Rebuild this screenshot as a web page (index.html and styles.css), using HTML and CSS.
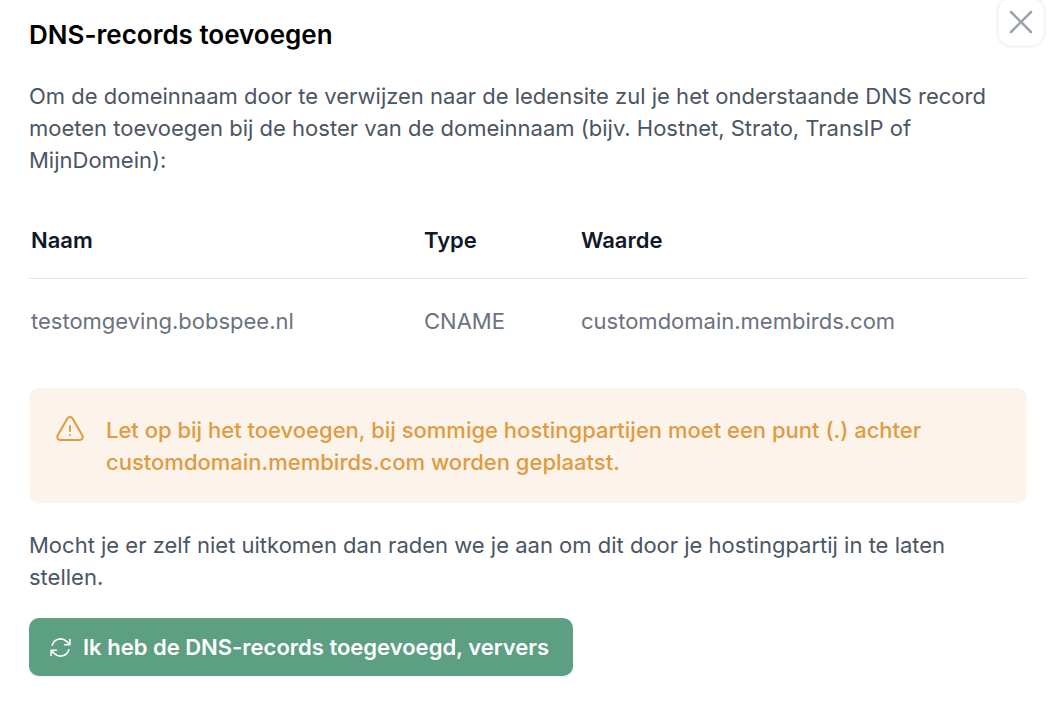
FILE: index.html
```html
<!DOCTYPE html>
<html lang="nl">
<head>
  <meta charset="UTF-8">
  <meta name="viewport" content="width=device-width, initial-scale=1.0">
  <title>DNS-records toevoegen</title>
  <link rel="stylesheet" href="styles.css">
</head>
<body>
  <main class="modal">
    <button type="button" class="close" aria-label="Sluiten">
      <svg viewBox="0 0 24 24" fill="none" stroke="currentColor" stroke-width="1.5" stroke-linecap="round" stroke-linejoin="round">
        <path d="M6 18 18 6M6 6l12 12"/>
      </svg>
    </button>

    <h1>DNS-records toevoegen</h1>
    <p class="intro">Om de domeinnaam door te verwijzen naar de ledensite zul je het onderstaande DNS record moeten toevoegen bij de hoster van de domeinnaam (bijv. Hostnet, Strato, TransIP of MijnDomein):</p>

    <table class="records">
      <thead>
        <tr>
          <th class="col-name">Naam</th>
          <th class="col-type">Type</th>
          <th>Waarde</th>
        </tr>
      </thead>
      <tbody>
        <tr>
          <td>testomgeving.bobspee.nl</td>
          <td>CNAME</td>
          <td>customdomain.membirds.com</td>
        </tr>
      </tbody>
    </table>

    <div class="warning">
      <svg viewBox="0 0 24 24" fill="none" stroke="currentColor" stroke-width="1.5" stroke-linecap="round" stroke-linejoin="round" aria-hidden="true">
        <path d="M12 9v3.75m-9.303 3.376c-.866 1.5.217 3.374 1.948 3.374h14.71c1.73 0 2.813-1.874 1.948-3.374L13.949 3.378c-.866-1.5-3.032-1.5-3.898 0L2.697 16.126ZM12 15.75h.007v.008H12v-.008Z"/>
      </svg>
      <p>Let op bij het toevoegen, bij sommige hostingpartijen moet een punt (.) achter customdomain.membirds.com worden geplaatst.</p>
    </div>

    <p class="help">Mocht je er zelf niet uitkomen dan raden we je aan om dit door je hostingpartij in te laten stellen.</p>

    <button type="button" class="refresh">
      <svg viewBox="0 0 24 24" fill="none" stroke="currentColor" stroke-width="1.5" stroke-linecap="round" stroke-linejoin="round" aria-hidden="true">
        <path d="M16.023 9.348h4.992v-.001M2.985 19.644v-4.992m0 0h4.992m-4.993 0 3.181 3.183a8.25 8.25 0 0 0 13.803-3.7M4.031 9.865a8.25 8.25 0 0 1 13.803-3.7l3.181 3.182m0-4.991v4.99"/>
      </svg>
      Ik heb de DNS-records toegevoegd, ververs
    </button>
  </main>
</body>
</html>
```
FILE: styles.css
```css
body {
  margin: 0;
  background: #fff;
  color: #4b5563;
  font-family: Inter, sans-serif;
  font-size: 22px;
  line-height: 32px;
}
h1, p {
  margin: 0;
}
.modal {
  position: relative;
  padding: 19px 27px 30px 29px;
}
h1 {
  color: #000;
  font-size: 26px;
  font-weight: 600;
}
.close {
  position: absolute;
  top: -4px;
  right: 8px;
  width: 50px;
  height: 52px;
  padding: 0;
  display: flex;
  align-items: center;
  justify-content: center;
  background: #fff;
  border: 3px solid #f4f6f7;
  border-radius: 15px;
  color: #9ca3af;
  cursor: pointer;
}
.close svg {
  width: 40px;
  height: 40px;
}
.intro {
  margin-top: 29px;
}
.records {
  width: 100%;
  margin-top: 24px;
  border-collapse: collapse;
  text-align: left;
}
.records th {
  padding: 24px 2px 22px;
  border-bottom: 1px solid #e5e7eb;
  color: #111827;
  font-weight: 600;
}
.records td {
  padding: 26px 2px 24px;
  color: #6b7280;
}
.col-name {
  width: 389px;
}
.col-type {
  width: 153px;
}
.warning {
  display: flex;
  gap: 20px;
  margin-top: 27px;
  padding: 26px 27px 25px 25px;
  background: #fcf4eb;
  border-radius: 10px;
  color: #e29a3f;
  font-weight: 500;
}
.warning svg {
  flex: none;
  width: 32px;
  height: 32px;
}
.help {
  margin-top: 26px;
  padding-right: 32px;
}
.refresh {
  display: flex;
  align-items: center;
  gap: 10px;
  margin-top: 25px;
  padding: 13px 24px 13px 19px;
  background: #5c9f82;
  border: none;
  border-radius: 10px;
  box-shadow: 0 2px 3px rgba(0, 0, 0, 0.05);
  color: #fff;
  font: inherit;
  font-weight: 600;
  cursor: pointer;
}
.refresh svg {
  width: 25px;
  height: 25px;
}
```
